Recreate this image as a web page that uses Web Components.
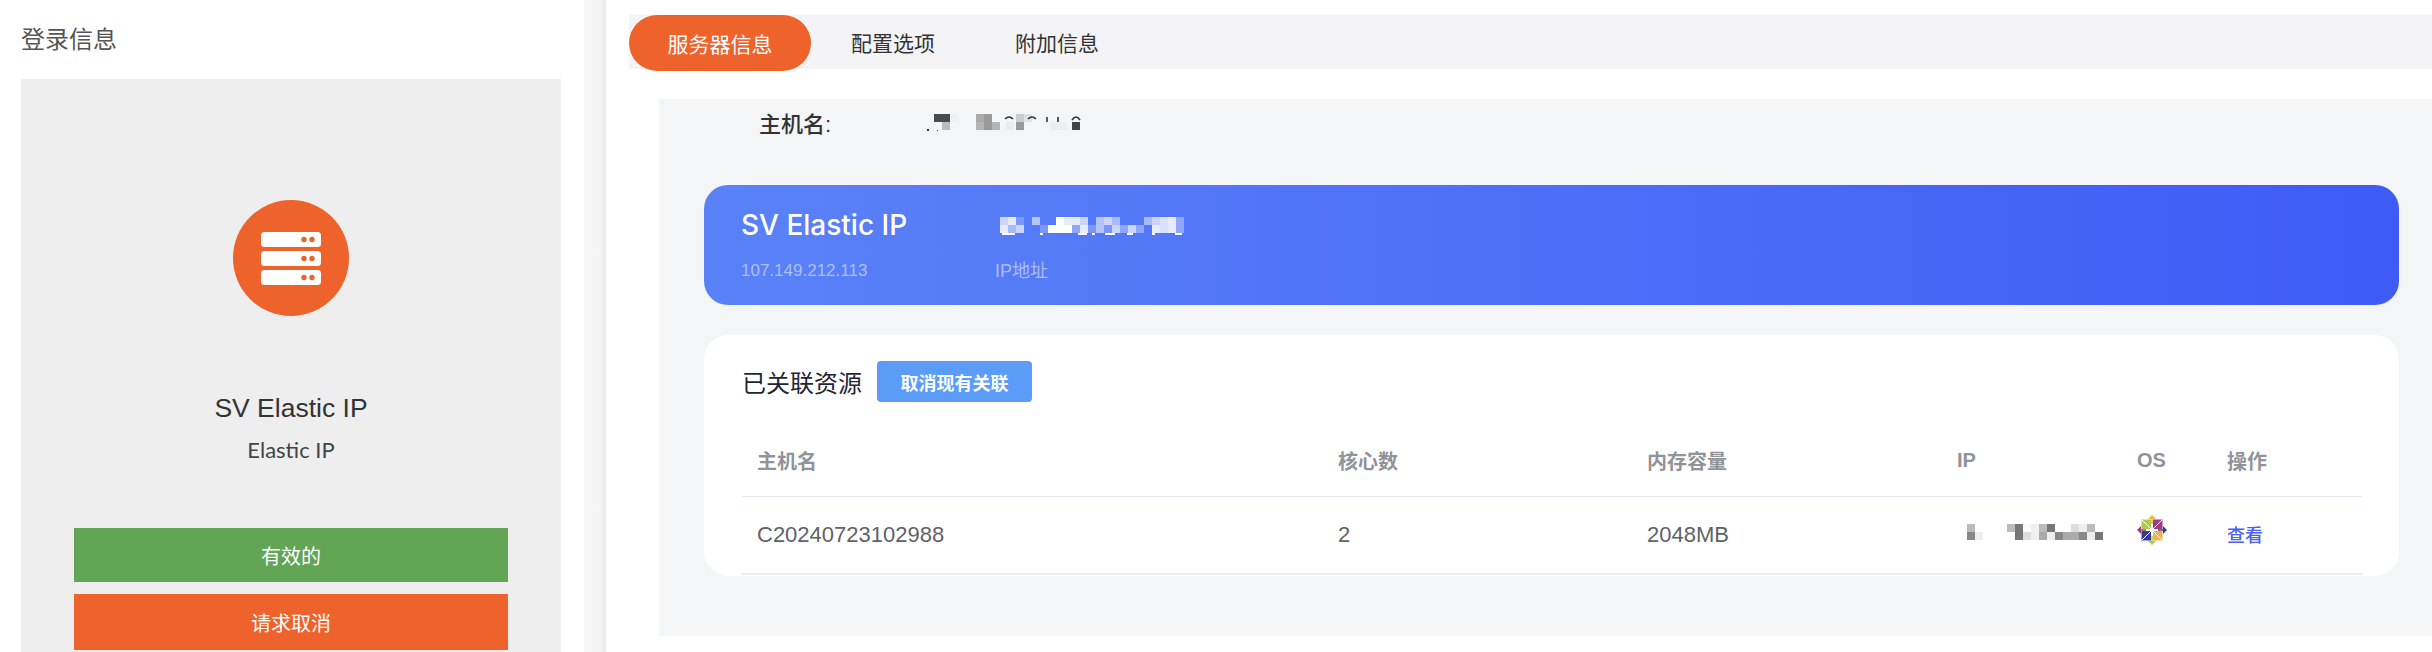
<!DOCTYPE html>
<html lang="zh">
<head>
<meta charset="utf-8">
<title>服务器信息</title>
<style>
  html, body { margin: 0; padding: 0; background: #fff; }
  body { width: 2432px; height: 652px; overflow: hidden; font-family: "Liberation Sans", "Noto Sans CJK SC", sans-serif; }
</style>
</head>
<body>
<service-page>
  <login-panel slot="left" title-text="登录信息" product="SV Elastic IP" kind="Elastic IP"></login-panel>
  <tab-bar slot="right" active="服务器信息" tabs="服务器信息,配置选项,附加信息"></tab-bar>
  <server-info slot="right"></server-info>
</service-page>

<script>
const define = (name, css, html, setup) => {
    class Comp extends HTMLElement {
        constructor() {
            super();
            this.attachShadow({ mode: 'open' });
        }
        connectedCallback() {
            const body = typeof html === 'function' ? html(this) : html;
            this.shadowRoot.innerHTML = `<style>${css}</style>${body}`;
            if (setup) setup(this);
        }
    }
    customElements.define(name, Comp);
};

const CJK = '"Noto Sans CJK SC", sans-serif';

define('service-page', `
    :host { display: flex; width: 2432px; height: 652px; overflow: hidden; }
    .left { width: 584px; flex: none; }
    .gutter { width: 22px; flex: none; background: linear-gradient(90deg, #f5f5f5 0, #f4f4f4 70%, #e9e9e9 100%); }
    .right { flex: 1; min-width: 0; padding-top: 15px; }
`, `
    <div class="left"><slot name="left"></slot></div>
    <div class="gutter"></div>
    <div class="right"><slot name="right"></slot></div>
`);

define('server-icon', `
    :host { display: block; width: 116px; height: 116px; }
    svg { display: block; }
`, `
    <svg width="116" height="116" viewBox="0 0 116 116">
      <circle cx="58" cy="58" r="58" fill="#ee632c"/>
      ${[32, 51, 70].map(y => `
        <rect x="28" y="${y}" width="60" height="15" rx="3.5" fill="#fff"/>
        <circle cx="71" cy="${y + 7.5}" r="2.7" fill="#ee632c"/>
        <circle cx="79" cy="${y + 7.5}" r="2.7" fill="#ee632c"/>`).join('')}
    </svg>
`);

define('login-panel', `
    :host { display: block; height: 652px; padding: 0 23px 0 21px; box-sizing: border-box; overflow: hidden; }
    h2 { margin: 0; height: 79px; font: 400 24px/79px "Liberation Sans", ${CJK}; color: #555; }
    .card { background: #eee; height: 600px; display: flex; flex-direction: column; align-items: center; padding-top: 121px; box-sizing: border-box; }
    .name { margin-top: 72px; font: 400 26.5px/40px "Liberation Sans", ${CJK}; color: #333; }
    .kind { margin-top: 8px; font: 400 22px/28px Lato, ${CJK}; color: #444; }
    .btn { width: 434px; display: flex; align-items: center; justify-content: center; color: #fff; font: 400 20px "Liberation Sans", ${CJK}; }
    .ok { height: 54px; margin-top: 64px; background: #62a555; }
    .cancel { height: 56px; margin-top: 12px; background: #ee632c; }
`, el => `
    <h2>${el.getAttribute('title-text')}</h2>
    <div class="card">
      <server-icon></server-icon>
      <div class="name">${el.getAttribute('product')}</div>
      <div class="kind">${el.getAttribute('kind')}</div>
      <div class="btn ok">有效的</div>
      <div class="btn cancel">请求取消</div>
    </div>
`);

define('tab-bar', `
    :host { display: block; margin-left: 23px; height: 54px; background: #f4f4f6; }
    .row { display: flex; height: 54px; }
    .tab { flex: none; display: flex; align-items: center; padding: 0 40px; height: 54px; font: 400 21px "Liberation Sans", ${CJK}; color: #333; }
    .on { width: 182px; height: 56px; padding: 0; justify-content: center; box-sizing: border-box; border-radius: 28px; background: #ee632c; color: #fff; }
`, el => `
    <div class="row">
      ${el.getAttribute('tabs').split(',').map(t =>
        `<div class="tab ${t === el.getAttribute('active') ? 'on' : ''}">${t}</div>`).join('')}
    </div>
`);

// mosaic over blurred values: "col,row,colour" triples separated by spaces
define('pixel-mosaic', `
    :host { display: block; }
    svg { display: block; filter: blur(0.7px); overflow: visible; }
`, el => {
    const w = +el.getAttribute('w'), h = +el.getAttribute('h');
    const cells = el.getAttribute('cells').trim().split(/\s+/).map(s => s.split(','));
    return `<svg width="${w}" height="${h}" viewBox="0 0 ${w} ${h}">
      ${cells.map(([c, r, f]) => `<rect x="${c * 8}" y="${r * 8}" width="8" height="8" fill="${f}"/>`).join('')}
      ${el.innerHTML}
    </svg>`;
});

define('os-logo', `
    :host { display: block; width: 30px; height: 30px; }
    svg { display: block; }
`, `
    <svg width="30" height="30" viewBox="0 0 30 30">
      <path d="M15 0l4 4h-3v5h-2V4h-3z" fill="#f0b342"/>
      <path d="M30 15l-4 4v-3h-5v-2h5v-3z" fill="#3a3a8c"/>
      <path d="M15 30l-4-4h3v-5h2v5h3z" fill="#a8cf45"/>
      <path d="M0 15l4-4v3h5v2H4v3z" fill="#9b3b86"/>
      <rect x="4.5" y="4.5" width="9.5" height="9.5" fill="#a8cf45"/>
      <rect x="16" y="4.5" width="9.5" height="9.5" fill="#9b3b86"/>
      <rect x="4.5" y="16" width="9.5" height="9.5" fill="#3a3a8c"/>
      <rect x="16" y="16" width="9.5" height="9.5" fill="#f0b342"/>
      <path d="M5 5l20 20M25 5L5 25" stroke="#fff" stroke-width="1"/>
      <path d="M15 4v22M4 15h22" stroke="#fff" stroke-width="1" opacity=".5"/>
      <circle cx="15" cy="15" r="2" fill="#fff"/>
    </svg>
`);

define('ip-banner', `
    :host { display: flex; height: 120px; border-radius: 24px; padding-left: 37px; box-sizing: border-box;
            background: linear-gradient(90deg, #5a82f7 0%, #3f5bf6 100%); color: #fff; }
    .col { display: flex; flex-direction: column; }
    .first { width: 254px; flex: none; }
    .top { height: 40px; margin-top: 20px; display: flex; align-items: center; font: 500 28px Inter, ${CJK}; }
    .sub { margin-top: 13px; font: 400 17px/26px "Liberation Sans", ${CJK}; color: rgba(255,255,255,.5); }
`, `
    <div class="col first">
      <div class="top">SV Elastic IP</div>
      <div class="sub">107.149.212.113</div>
    </div>
    <div class="col">
      <div class="top"><pixel-mosaic w="184" h="18" style="margin:1px 0 0 5px" cells="
        0,0,#ccd6fc 1,0,#e6ebfe 2,0,#7c97f8 4,0,#b5c4fb
        0,1,#e6ebfe 1,1,#a8baf9 2,1,#ccd6fc 5,1,#7c97f8
        6,1,#fff 7,0,#fff 7,1,#fff 8,0,#e6ebfe 8,1,#fff 9,0,#e6ebfe 9,1,#8fa6f9 10,0,#ccd6fc 10,1,#e6ebfe
        11,1,#7c97f8 12,0,#b5c4fb 12,1,#b5c4fb 13,0,#ccd6fc 13,1,#7c97f8 14,0,#a8baf9 14,1,#ccd6fc
        15,1,#8fa6f9 16,1,#ccd6fc 17,1,#8fa6f9 18,0,#a8baf9 19,0,#ccd6fc 19,1,#e6ebfe
        20,0,#d9e1fd 20,1,#d9e1fd 21,0,#e6ebfe 21,1,#e6ebfe 22,0,#8fa6f9 22,1,#8fa6f9"><path fill="#fff" d="M2 16h13v2H2zM40 16h3v2h-3zM78 16h9v2h-9zM92 16h3v2h-3zM105 16h10v2h-10zM127 16h6v2h-6zM152 16h3v2h-3zM175 16h7v2h-7z"></path></pixel-mosaic></div>
      <div class="sub" style="font-size:18px">IP地址</div>
    </div>
`);

define('resource-table', `
    :host { display: block; }
    .grid { display: grid; grid-template-columns: 596px 309px 310px 180px 90px 135px; width: 1620px; }
    .c { display: flex; align-items: center; box-sizing: border-box; }
    .c:nth-child(6n+1) { padding-left: 15px; }
    .h { height: 71px; padding-bottom: 2px; border-bottom: 1px solid #e6eaf6; font: 700 20px "Liberation Sans", ${CJK}; color: #909399; }
    .d { height: 78px; border-bottom: 2px solid #ebedf0; font: 400 22px "Liberation Sans", ${CJK}; color: #606266; }
    .link { color: #4a5ef5; font-size: 18px; font-weight: 500; }
`, `
    <div class="grid">
      <div class="c h">主机名</div><div class="c h">核心数</div><div class="c h">内存容量</div>
      <div class="c h">IP</div><div class="c h">OS</div><div class="c h">操作</div>
      <div class="c d">C20240723102988</div><div class="c d">2</div><div class="c d">2048MB</div>
      <div class="c d"><pixel-mosaic w="144" h="14" style="margin:-9px 0 0 10px" cells="
        0,0,#bbb 0,1,#888 1,1,#eee 5,0,#bbb 6,0,#777 6,1,#777 7,0,#fafafa 7,1,#ddd 8,0,#f0f0f0 8,1,#f0f0f0
        9,0,#bbb 9,1,#aaa 10,0,#777 10,1,#eee 11,1,#888 12,1,#aaa 13,0,#ddd 13,1,#aaa 14,0,#eee 14,1,#888
        15,0,#bbb 15,1,#eee 16,1,#777"></pixel-mosaic></div>
      <div class="c d"><os-logo style="margin-top:-11px"></os-logo></div>
      <div class="c d link"><span style="margin-top:-2px">查看</span></div>
    </div>
`);

define('linked-card', `
    :host { display: block; height: 241px; margin-top: 30px; padding: 26px 37px 0 38px; box-sizing: border-box; background: #fff; border-radius: 24px; }
    .head { display: flex; align-items: center; height: 41px; margin-bottom: 24px; }
    .t { font: 400 24px "Liberation Sans", ${CJK}; color: #1f2533; }
    .b { margin-left: 15px; width: 155px; height: 41px; display: flex; align-items: center; justify-content: center; border-radius: 4px; background: #5a9cf8; color: #fff; font: 700 18px "Liberation Sans", ${CJK}; }
`, `
    <div class="head"><div class="t">已关联资源</div><div class="b">取消现有关联</div></div>
    <resource-table></resource-table>
`);

define('server-info', `
    :host { display: block; margin: 30px 0 0 53px; height: 537px; padding: 0 33px 0 45px; box-sizing: border-box; background: #f4f5f7; }
    .host { display: flex; align-items: center; height: 46px; margin-bottom: 40px; padding-left: 55px; font: 500 22px "Liberation Sans", ${CJK}; color: #333; }
    .label { width: 167px; flex: none; }
`, `
    <div class="host">
      <div class="label">主机名:</div>
      <pixel-mosaic w="154" h="18" style="margin-top:2px" cells="
        1,0,#4a4a4a 2,0,#4a4a4a 3,0,#f0f0f0 2,1,#bbb
        6.25,0,#aaa 7.25,0,#999 6.25,1,#b5b5b5 7.25,1,#999 8.25,1,#b5b5b5 10,1,#ececec
        11.25,0,#ccc 11.25,1,#999 12.25,0,#e0e0e0 15.5,1,#eee 16.5,1,#eee"><path fill="#333" d="M1 15h2v2H1zM11 16h1v1h-1z"></path><rect x="146" y="8" width="8" height="8" fill="#444"></rect><path fill="none" stroke="#333" stroke-width="1.6" d="M79 5q4-4 8 0M102 5q4-4 8 0M121 3v5M132 3v5M146 6q4-6 8 0"></path></pixel-mosaic>
    </div>
    <ip-banner></ip-banner>
    <linked-card></linked-card>
`);
</script>
</body>
</html>
